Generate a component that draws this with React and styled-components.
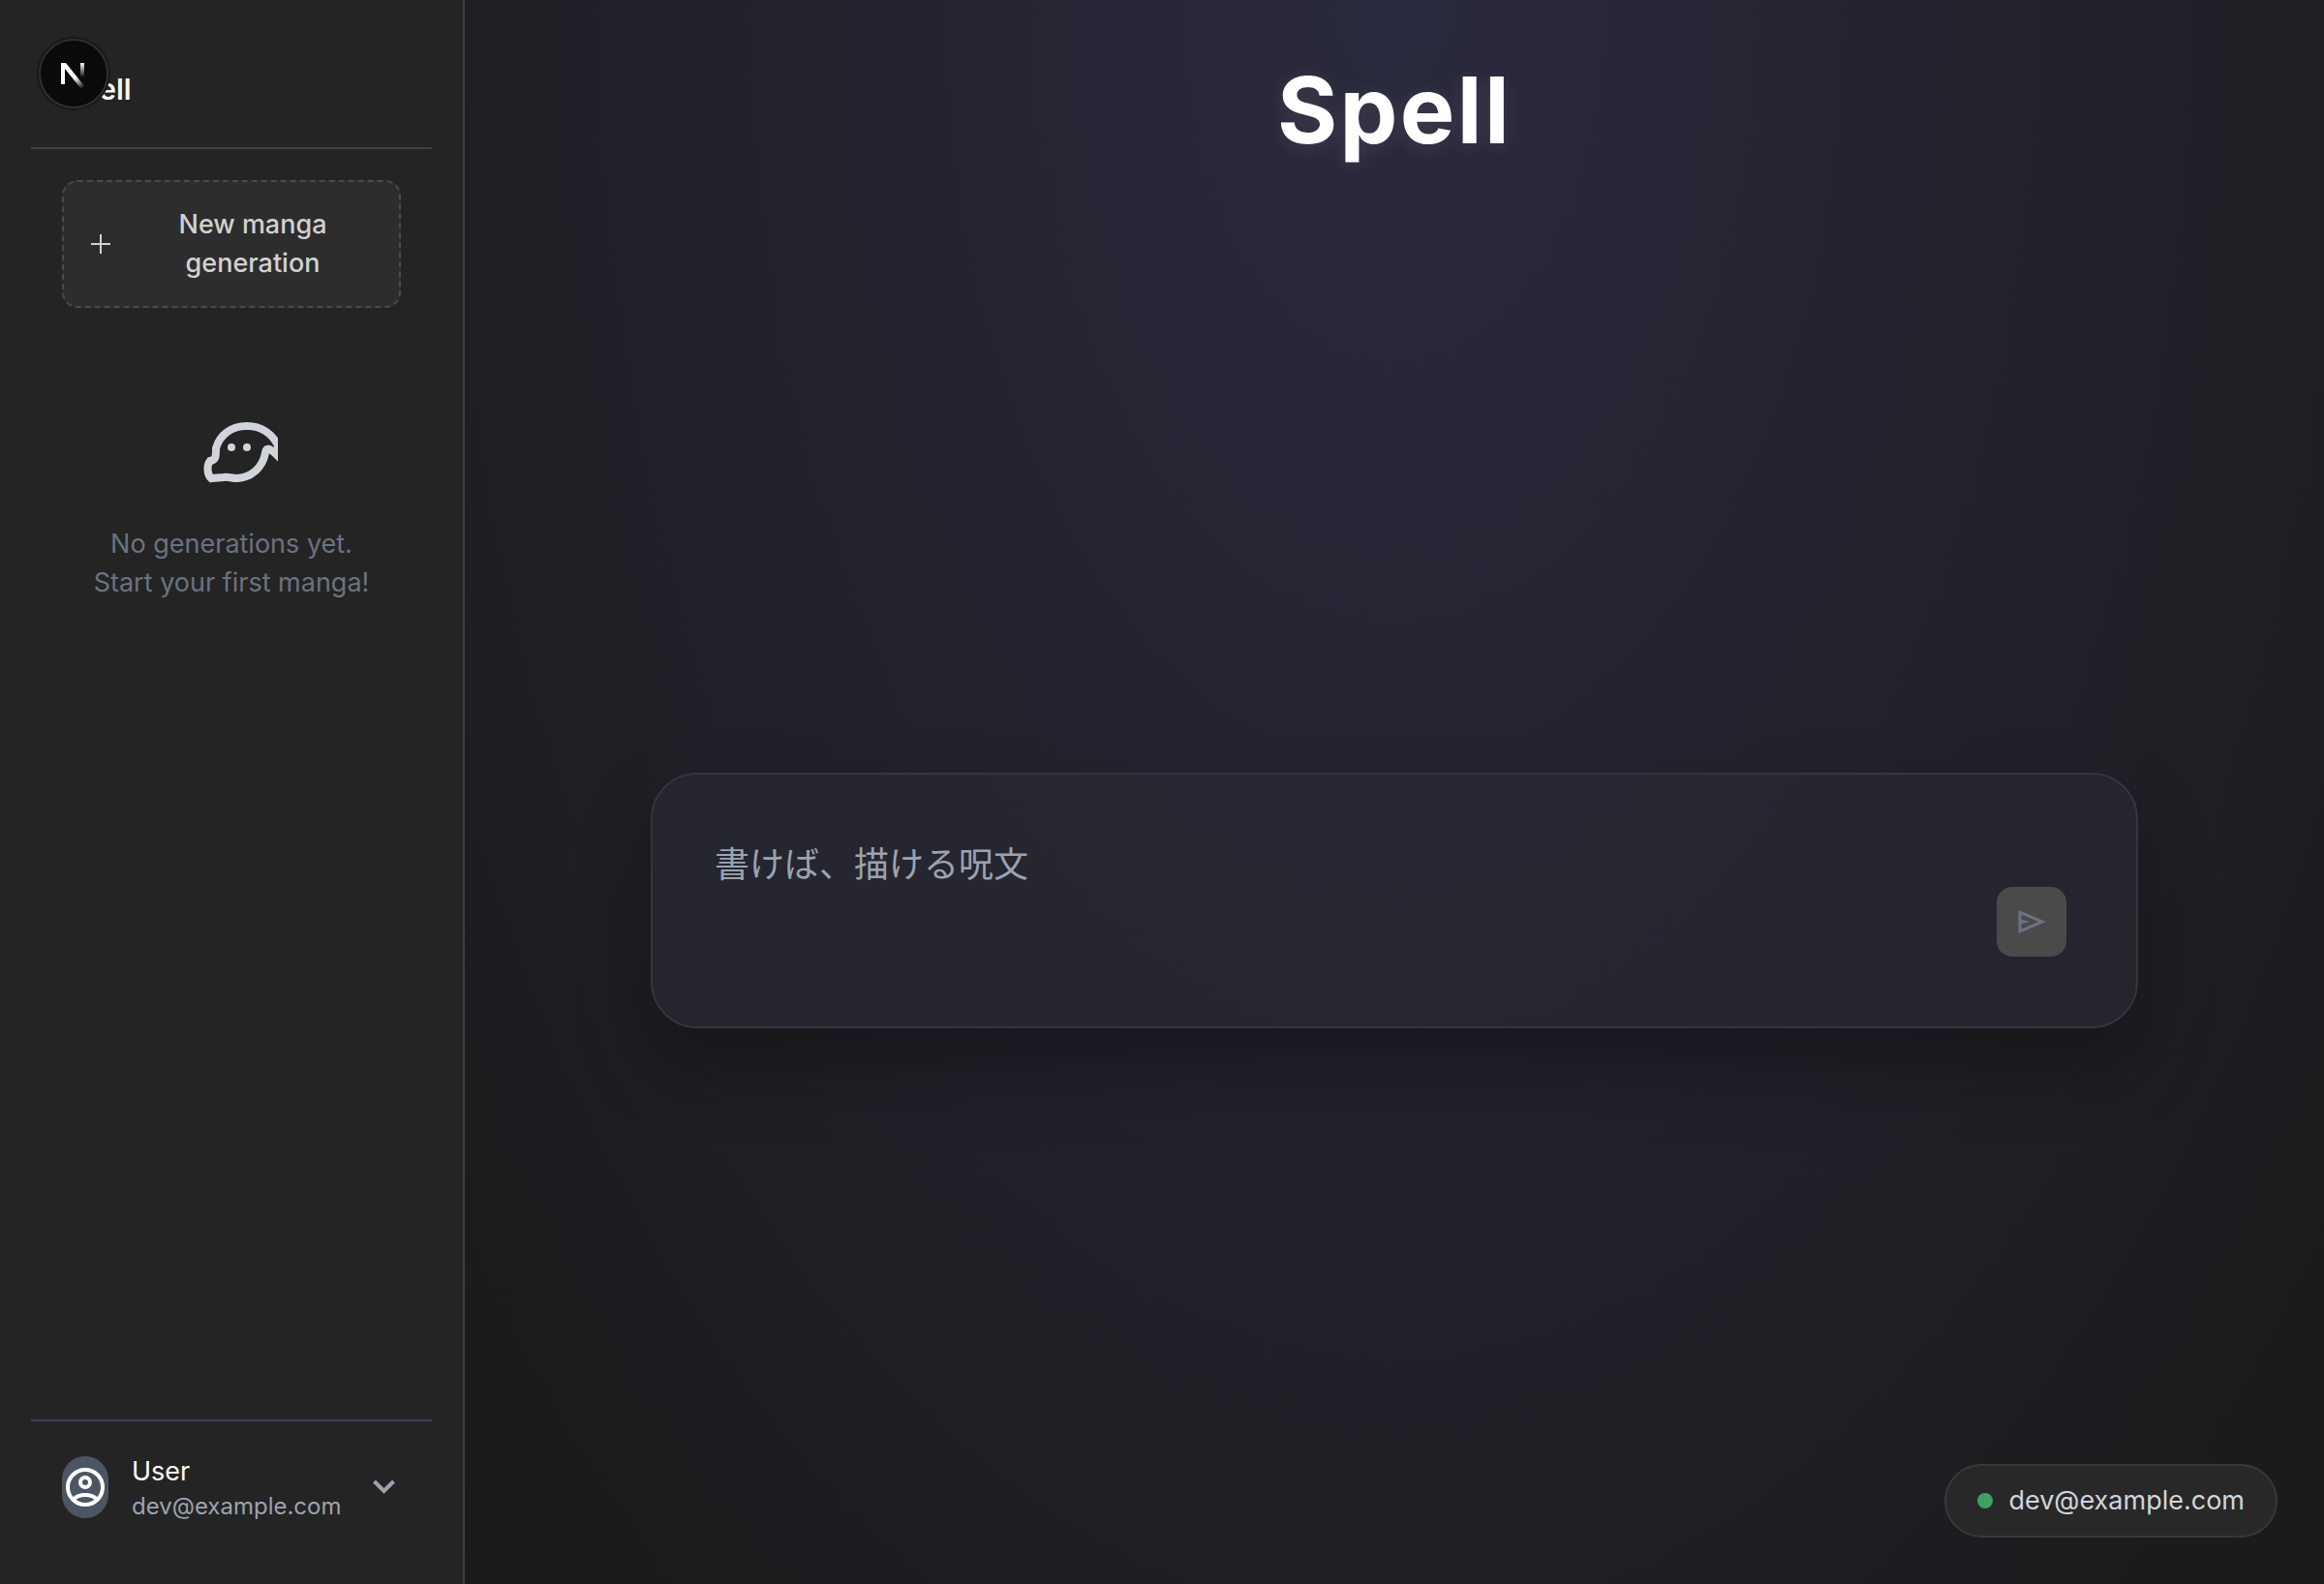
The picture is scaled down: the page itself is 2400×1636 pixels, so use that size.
import React from "react";
import styled, { createGlobalStyle } from "styled-components";

const GlobalStyle = createGlobalStyle`
  *, *::before, *::after { box-sizing: border-box; }
  body {
    margin: 0;
    background: #1a1a1a;
    color: #fff;
    font-family: Inter, "Noto Sans CJK JP", sans-serif;
    -webkit-font-smoothing: antialiased;
  }
  button, textarea { font: inherit; }
  p, h1, h2 { margin: 0; }
`;

const Shell = styled.div`
  display: flex;
  min-height: 100vh;
`;

const Sidebar = styled.aside`
  display: flex;
  flex-direction: column;
  flex: 0 0 480px;
  padding: 32px;
  background: #242424;
  border-right: 2px solid #404040;
`;

const SidebarHeader = styled.header`
  padding: 32px;
  border-bottom: 2px solid #404040;
`;

const SidebarTitle = styled.h2`
  font-size: 30px;
  line-height: 56px;
  font-weight: 600;
  color: #f5f5f5;
`;

const SidebarBody = styled.div`
  display: flex;
  flex-direction: column;
  flex: 1;
  padding: 32px;
`;

const NewButton = styled.button`
  display: flex;
  align-items: center;
  gap: 16px;
  padding: 24px;
  border: 2px dashed #4a4a4a;
  border-radius: 16px;
  background: #2d2d2d;
  color: #d1d1d1;
  font-size: 27px;
  line-height: 40px;
  font-weight: 500;
  cursor: pointer;
  svg { flex: none; }
  span { flex: 1; text-align: center; }
`;

const Empty = styled.div`
  display: flex;
  flex-direction: column;
  align-items: center;
  gap: 32px;
  padding-top: 96px;
  color: #6b7280;
  font-size: 27px;
  line-height: 40px;
  text-align: center;
  white-space: nowrap;
`;

const SidebarFooter = styled.footer`
  padding: 32px;
  border-top: 2px solid #374151;
`;

const UserButton = styled.button`
  display: flex;
  align-items: center;
  gap: 24px;
  width: 100%;
  padding: 0;
  border: 0;
  background: none;
  color: #fff;
  text-align: left;
  cursor: pointer;
`;

const Avatar = styled.span`
  display: flex;
  align-items: center;
  justify-content: center;
  flex: none;
  width: 48px;
  height: 64px;
  border-radius: 32px;
  background: #4b5563;
`;

const UserText = styled.span`
  display: flex;
  flex-direction: column;
  flex: 1;
`;

const UserName = styled.span`
  font-size: 27px;
  line-height: 40px;
`;

const UserMail = styled.span`
  color: #9ca3af;
  font-size: 24px;
  line-height: 32px;
`;

const Main = styled.main`
  display: flex;
  flex-direction: column;
  align-items: center;
  flex: 1;
  padding: 64px 192px;
  background: radial-gradient(ellipse at top, #2a2a3e 0%, #1a1a1a 100%);
`;

const Title = styled.h1`
  font-size: 95px;
  line-height: 100px;
  font-weight: 700;
  letter-spacing: 0.025em;
  text-shadow: 0 4px 20px rgba(255, 255, 255, 0.1);
`;

const PromptArea = styled.div`
  display: flex;
  align-items: center;
  flex: 1;
  width: 100%;
  padding-top: 124px;
`;

const Prompt = styled.form`
  display: flex;
  align-items: center;
  gap: 32px;
  width: 100%;
  padding: 64px 72px 64px 64px;
  border: 2px solid #35353d;
  border-radius: 48px;
  background: rgba(42, 42, 54, 0.6);
  box-shadow: 0 40px 80px rgba(0, 0, 0, 0.3);
`;

const PromptInput = styled.textarea`
  flex: 1;
  height: 132px;
  padding: 0;
  border: 0;
  outline: 0;
  resize: none;
  background: none;
  color: #fff;
  font-size: 36px;
  line-height: 58px;
  &::placeholder { color: #9ca3af; opacity: 1; }
`;

const SendButton = styled.button`
  display: flex;
  align-items: center;
  justify-content: center;
  align-self: flex-end;
  width: 72px;
  height: 72px;
  margin-bottom: 8px;
  padding: 0;
  border: 0;
  border-radius: 16px;
  background: #4a4a4a;
  color: #6b7280;
`;

const Account = styled.div`
  position: fixed;
  right: 48px;
  bottom: 48px;
  display: flex;
  align-items: center;
  gap: 16px;
  padding: 16px 32px;
  border: 2px solid #383838;
  border-radius: 40px;
  background: #282829;
  color: #d1d5db;
  font-size: 27px;
  line-height: 40px;
`;

const StatusDot = styled.span`
  width: 16px;
  height: 16px;
  border-radius: 50%;
  background: #409f65;
`;

const DevBadge = styled.button`
  position: fixed;
  top: 40px;
  left: 40px;
  display: flex;
  align-items: center;
  justify-content: center;
  width: 72px;
  height: 72px;
  padding: 0;
  border: 2px solid #2e2e2e;
  border-radius: 50%;
  background: #0a0a0a;
  box-shadow: 0 0 0 2px #191919;
`;

function NextMark() {
  return (
    <svg width="32" height="32" viewBox="0 0 32 32" fill="none" aria-hidden="true">
      <defs>
        <linearGradient id="stem" x1="0" y1="5" x2="0" y2="20" gradientUnits="userSpaceOnUse">
          <stop stopColor="#fff" />
          <stop offset="1" stopColor="#fff" stopOpacity="0" />
        </linearGradient>
        <linearGradient id="slash" x1="18" y1="20" x2="26" y2="31" gradientUnits="userSpaceOnUse">
          <stop stopColor="#fff" />
          <stop offset="1" stopColor="#fff" stopOpacity="0" />
        </linearGradient>
      </defs>
      <path d="M3 5h5l20 25-4 2L7 11v16H3z" fill="url(#slash)" />
      <path d="M23 5h4v16h-4z" fill="url(#stem)" />
    </svg>
  );
}

export default function App() {
  return (
    <>
      <GlobalStyle />
      <Shell>
        <Sidebar>
          <SidebarHeader>
            <SidebarTitle>Spell</SidebarTitle>
          </SidebarHeader>
          <SidebarBody>
            <NewButton type="button">
              <svg width="28" height="28" viewBox="0 0 28 28" stroke="currentColor" strokeWidth="2" aria-hidden="true">
                <path d="M14 4v20M4 14h20" />
              </svg>
              <span>New manga generation</span>
            </NewButton>
            <Empty>
              <svg width="96" height="96" viewBox="0 0 96 96" fill="none" aria-hidden="true">
                <path d="M32 49C36 35 48 26 64 26c15 0 26 8 32 20v11c-5-5-12-12-13-3-3 15-14 25-29 26-7 0-9-2-14-1l-13 1c-4-4-5-13-1-18 6-1 6-4 6-13z" stroke="#d1d5db" strokeWidth="8" />
                <circle cx="48" cy="48" r="4" fill="#d1d5db" />
                <circle cx="64" cy="48" r="4" fill="#d1d5db" />
              </svg>
              <p>No generations yet.<br />Start your first manga!</p>
            </Empty>
          </SidebarBody>
          <SidebarFooter>
            <UserButton type="button">
              <Avatar>
                <svg width="48" height="48" viewBox="0 0 24 24" fill="none" stroke="#fff" strokeWidth="2" aria-hidden="true">
                  <circle cx="12" cy="12" r="9" />
                  <circle cx="12" cy="9.5" r="2.5" />
                  <path d="M5.9 18.3C9 15.3 15 15.3 18.1 18.3" />
                </svg>
              </Avatar>
              <UserText>
                <UserName>User</UserName>
                <UserMail>dev@example.com</UserMail>
              </UserText>
              <svg width="32" height="32" viewBox="0 0 32 32" fill="none" stroke="#9ca3af" strokeWidth="4" aria-hidden="true">
                <path d="M4.500 10l10 10 10-10" />
              </svg>
            </UserButton>
          </SidebarFooter>
        </Sidebar>
        <Main>
          <Title>Spell</Title>
          <PromptArea>
            <Prompt onSubmit={(e) => e.preventDefault()}>
              <PromptInput aria-label="書けば、描ける呪文" placeholder="書けば、描ける呪文" />
              <SendButton type="submit" disabled aria-label="Send">
                <svg width="36" height="36" viewBox="0 0 24 24" fill="currentColor" aria-hidden="true">
                  <path d="M3 20V4l19 8zm2-3 11.850-5L5 7v3.500l6 1.500-6 1.500z" />
                </svg>
              </SendButton>
            </Prompt>
          </PromptArea>
        </Main>
      </Shell>
      <Account>
        <StatusDot />
        <span>dev@example.com</span>
      </Account>
      <DevBadge type="button" aria-label="Next.js">
        <NextMark />
      </DevBadge>
    </>
  );
}
